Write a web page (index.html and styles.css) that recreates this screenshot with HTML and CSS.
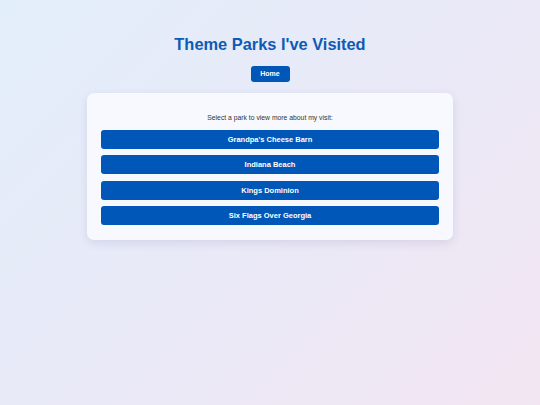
FILE: index.html
```html
<!DOCTYPE html>
<html>
<head>
<meta charset="utf-8">
<link rel="stylesheet" href="styles.css">
</head>
<body>
<div class="page">
  <h1 class="title">Theme Parks I've Visited</h1>
  <nav class="nav"><a class="home" href="#">Home</a></nav>
  <main class="card">
    <p class="lead">Select a park to view more about my visit:</p>
    <div class="list">
      <a class="park" href="#">Grandpa's Cheese Barn</a>
      <a class="park" href="#">Indiana Beach</a>
      <a class="park" href="#">Kings Dominion</a>
      <a class="park" href="#">Six Flags Over Georgia</a>
    </div>
  </main>
</div>
</body>
</html>
```
FILE: styles.css
```css
html, body {
  margin: 0;
  padding: 0;
  height: 100%;
}
body {
  font-family: "Liberation Sans", Arial, sans-serif;
  background: linear-gradient(135deg, #e3eefb 0%, #e9e9f7 50%, #f3e6f2 100%);
  min-height: 405px;
}
.page {
  display: flex;
  flex-direction: column;
  align-items: center;
  padding-top: 34px;
}
.title {
  margin: 0;
  font-size: 16.4px;
  line-height: 20px;
  font-weight: bold;
  color: #0d5bb5;
}
.nav {
  margin-top: 12px;
}
.home {
  display: block;
  width: 39px;
  height: 16px;
  line-height: 16px;
  text-align: center;
  background: #0057b7;
  color: #fff;
  font-size: 7px;
  font-weight: bold;
  text-decoration: none;
  border-radius: 3px;
}
.card {
  margin-top: 11px;
  width: 338px;
  padding: 19px 14px 15px;
  background: #f8f9fe;
  border-radius: 7px;
  box-shadow: 0 3px 10px rgba(60, 60, 120, 0.12);
}
.lead {
  margin: 0 0 6px;
  text-align: center;
  font-size: 6.8px;
  line-height: 12px;
  color: #333;
}
.list {
  display: flex;
  flex-direction: column;
  gap: 6.33px;
}
.park {
  display: block;
  height: 19px;
  line-height: 19px;
  text-align: center;
  background: #0057b7;
  color: #fff;
  font-size: 7.5px;
  font-weight: bold;
  text-decoration: none;
  border-radius: 3px;
}
```
